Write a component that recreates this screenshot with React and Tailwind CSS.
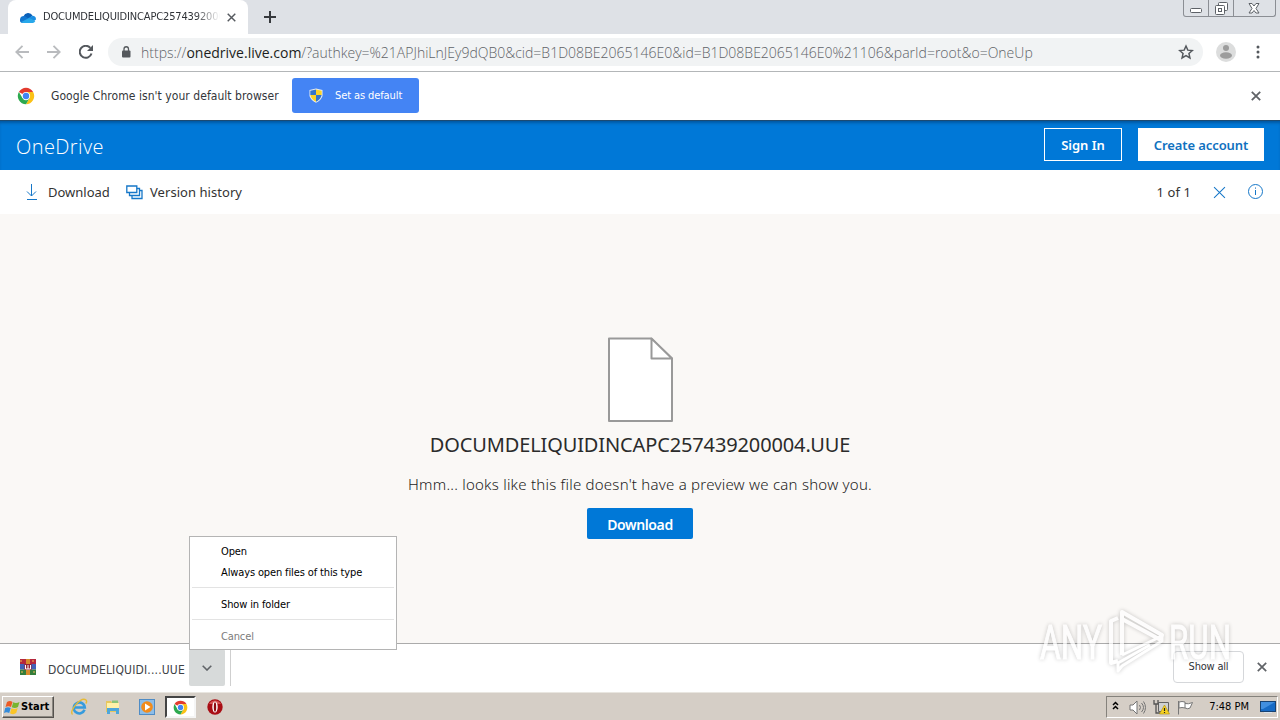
import React from 'react';
import { clsx } from 'clsx';

const segoe = "font-['Noto_Sans','Open_Sans',sans-serif]";
const tahoma = "font-['DejaVu_Sans_Condensed','DejaVu_Sans',sans-serif]";

function ChromeLogo({ className }) {
  return (
    <svg viewBox="0 0 48 48" className={className}>
      <circle cx="24" cy="24" r="22" fill="#fff" />
      <path d="M24 24 5 13A22 22 0 0 1 43 13H24Z" fill="#e33b2e" />
      <path d="M24 13h19A22 22 0 0 1 24 46l9.500-16.500Z" fill="#fbc116" />
      <path d="M5 13A22 22 0 0 0 24 46l9.500-16.500L14.500 29.500Z" fill="#2da94f" />
      <circle cx="24" cy="24" r="11" fill="#fff" />
      <circle cx="24" cy="24" r="8.500" fill="#4285f4" />
    </svg>
  );
}

function CloseIcon({ className, width = 2 }) {
  return (
    <svg viewBox="0 0 10 10" className={className} fill="none" stroke="currentColor" strokeWidth={width}>
      <path d="M.8.8l8.400 8.400M9.200.8.8 9.200" />
    </svg>
  );
}

function WindowControls() {
  return (
    <div className="flex h-[17px] w-[93px] shrink-0 rounded-b-[3px] border border-t-0 border-[#8b8e94] text-[#5d6167]">
      <div className="flex w-[25px] items-center justify-center border-r border-[#8b8e94]">
        <svg viewBox="0 0 13 13" className="h-[13px] w-[13px]" fill="#fff" stroke="currentColor">
          <rect x=".5" y="6.500" width="11" height="4" rx="1" />
        </svg>
      </div>
      <div className="flex w-[25px] items-center justify-center border-r border-[#8b8e94]">
        <svg viewBox="0 0 13 13" className="h-[13px] w-[13px]" fill="#fff" stroke="currentColor">
          <rect x="3.500" y=".5" width="9" height="8" rx="1" />
          <rect x=".5" y="3.500" width="9" height="9" rx="1" />
          <rect x="3.500" y="6.500" width="3" height="3" />
        </svg>
      </div>
      <div className="flex flex-1 items-center justify-center">
        <svg viewBox="0 0 13 11" className="h-[11px] w-[13px]" fill="#fff" stroke="currentColor">
          <path d="M1 .5h3l2 2.500 2-2.500h3L8 5.500l3 4.500H8L6 7.500 4 10H1l3-4.500Z" />
        </svg>
      </div>
    </div>
  );
}

function TabStrip() {
  return (
    <div className="flex h-[34px] items-start bg-[#dee1e6]">
      <div className="ml-2 flex h-[34px] w-[240px] items-center rounded-t-lg bg-white pl-3">
        <svg viewBox="0 0 16 11" className="h-[11px] w-4 shrink-0">
          <path d="M3.500 4.200A5 5 0 0 1 12.500 3.500L8 8Z" fill="#0a60b8" />
          <path d="M0 7.500A3.500 3.500 0 0 1 5 4.300L11 8 2 11A3 3 0 0 1 0 7.500Z" fill="#1377d0" />
          <path d="M8 6.200 12.300 3.700A3.700 3.700 0 0 1 16 7.400L14 9Z" fill="#1b8ee2" />
          <path d="M1.300 10 9 6l6.300 3A3 3 0 0 1 13 11H3.500A3.500 3.500 0 0 1 1.300 10Z" fill="#28a8ea" />
        </svg>
        <span className={clsx(tahoma, 'ml-[7px] w-[177px] shrink-0 overflow-hidden whitespace-nowrap text-[11px] tracking-[-0.15px] text-[#2f3237] [mask-image:linear-gradient(90deg,#000_86%,transparent)]')}>
          DOCUMDELIQUIDINCAPC257439200004.UUE
        </span>
        <CloseIcon className="ml-[7px] h-[9px] w-[9px] shrink-0 text-[#55595e]" width={1.6} />
      </div>
      <svg viewBox="0 0 12 12" className="mt-[11px] ml-4 h-3 w-3" stroke="#36393d" strokeWidth="2">
        <path d="M6 0v12M0 6h12" />
      </svg>
      <div className="flex-1" />
      <WindowControls />
      <div className="w-1" />
    </div>
  );
}

function AddressBar() {
  return (
    <div className="flex h-[38px] items-center border-b border-[#b3b6b8] bg-white">
      <svg viewBox="0 0 14 14" className="mt-[-1px] ml-[15px] h-[14px] w-[14px]" fill="none" stroke="#b9bbbe" strokeWidth="1.800">
        <path d="M14 7H1.500M7.500.8 1.300 7l6.200 6.200" />
      </svg>
      <svg viewBox="0 0 14 14" className="mt-[-1px] ml-[18px] h-[14px] w-[14px]" fill="none" stroke="#b9bbbe" strokeWidth="1.800">
        <path d="M0 7h12.500M6.500.8 12.700 7l-6.200 6.200" />
      </svg>
      <svg viewBox="0 0 14 14" className="mt-[-1px] ml-[18px] h-[14px] w-[14px]" fill="none" stroke="#54585d" strokeWidth="2">
        <path d="M12.500 8.500A6 6 0 1 1 11.300 2.900" />
        <path d="M14 0v6H8Z" fill="#54585d" stroke="none" />
      </svg>
      <div className="mt-[-1px] ml-[15px] flex h-7 w-[1095px] items-center rounded-full bg-[#f1f3f4] pl-[13px]">
        <svg viewBox="0 0 10 12" className="h-3 w-[10px]">
          <rect x="1" y="4.500" width="8.500" height="7" rx="1" fill="#55595d" />
          <path d="M3 5V3a2.250 2.250 0 0 1 4.500 0v2" fill="none" stroke="#55595d" strokeWidth="1.300" />
        </svg>
        <span className="ml-[10px] whitespace-nowrap font-['Open_Sans','Noto_Sans',sans-serif] text-[14px] font-light tracking-[0.003px] text-[#5f6368]">
          https://<span className="font-normal text-[#1c1e21]">onedrive.live.com</span>/?authkey=%21APJhiLnJEy9dQB0&amp;cid=B1D08BE2065146E0&amp;id=B1D08BE2065146E0%21106&amp;parId=root&amp;o=OneUp
        </span>
        <div className="flex-1" />
        <svg viewBox="0 0 24 24" className="mr-[9px] h-4 w-4" fill="none" stroke="#54585d" strokeWidth="2.200">
          <path d="m12 3 2.700 6.200 6.800.6-5.100 4.500 1.500 6.600-5.900-3.500-5.900 3.500 1.500-6.600-5.100-4.500 6.800-.6Z" />
        </svg>
      </div>
      <svg viewBox="0 0 20 20" className="mt-[-1px] ml-[13px] h-5 w-5">
        <circle cx="10" cy="10" r="10" fill="#dcdddd" />
        <circle cx="10" cy="6" r="3" fill="#9c9c9c" />
        <ellipse cx="10" cy="13.500" rx="6" ry="3.200" fill="#9c9c9c" />
      </svg>
      <svg viewBox="0 0 4 14" className="mt-[-1px] ml-[20px] h-[14px] w-1" fill="#54585d">
        <circle cx="2" cy="2" r="1.500" />
        <circle cx="2" cy="7" r="1.500" />
        <circle cx="2" cy="12" r="1.500" />
      </svg>
    </div>
  );
}

function Shield({ className }) {
  return (
    <svg viewBox="0 0 14 15" className={className}>
      <path d="M7 .5 13.500 2v6Q12 12.500 7 14.700 2 12.500.5 8V2Z" fill="#e9edf2" />
      <path d="M7 1.500V7H1.300V2.700Z" fill="#3375cb" />
      <path d="M7 1.500V7h5.700V2.700Z" fill="#fbd327" />
      <path d="M7 7v6.700Q2.400 11.500 1.300 7Z" fill="#fbd327" />
      <path d="M7 7v6.700Q11.600 11.500 12.700 7Z" fill="#3375cb" />
    </svg>
  );
}

function DefaultBrowserBar() {
  return (
    <div className="flex h-12 items-center bg-white">
      <ChromeLogo className="ml-[17px] h-[18px] w-[18px]" />
      <span className={clsx(tahoma, 'ml-4 w-[241px] whitespace-nowrap text-[12px] tracking-[0.05px] text-[#33363a]')}>
        Google Chrome isn't your default browser
      </span>
      <button className="mt-[-1px] flex h-[35px] w-[127px] items-center rounded-[3px] bg-[#4484f4] pl-[17px]">
        <Shield className="h-[15px] w-[14px]" />
        <span className={clsx(tahoma, 'mt-px ml-3 whitespace-nowrap text-[11px] tracking-[-0.1px] text-white')}>Set as default</span>
      </button>
      <div className="flex-1" />
      <CloseIcon className="mr-[19px] h-[10px] w-[10px] text-[#606367]" width={1.8} />
    </div>
  );
}

function OneDriveHeader() {
  return (
    <div className="flex h-[50px] items-center border-t border-[#1c4a72] bg-[#0078d7] pr-4 pb-[2px] pl-4 shadow-[inset_0_3px_3px_-1px_rgba(0,50,100,0.45)]">
      <span className="mt-[5px] font-['Open_Sans','Noto_Sans',sans-serif] text-[20px] font-light tracking-[0.4px] text-white">OneDrive</span>
      <div className="flex-1" />
      <button className={clsx(segoe, 'h-[33px] w-[78px] border border-white pt-[2px] text-[13px] font-semibold text-white')}>Sign In</button>
      <button className={clsx(segoe, 'ml-4 h-[33px] w-[126px] bg-white pt-[2px] text-[13px] font-semibold tracking-[-0.1px] whitespace-nowrap text-[#1071bf]')}>
        Create account
      </button>
    </div>
  );
}

function CommandBar() {
  return (
    <div className={clsx(segoe, 'flex h-11 items-center bg-white text-[13px] text-[#333]')}>
      <svg viewBox="0 0 12 16" className="ml-[26px] h-4 w-3" fill="none" stroke="#1677c8">
        <path d="M5.500 0v12M1 7.500 5.500 12 10 7.500M1 15.500h10" />
      </svg>
      <span className="mt-[2px] ml-[10px] w-[62px] whitespace-nowrap">Download</span>
      <svg viewBox="0 0 17 15" className="ml-4 h-[15px] w-[17px]" fill="#fff" stroke="#1677c8" strokeWidth="1.300">
        <path d="M6 13.500V5.500h10v8Z" />
        <path d="M3.500 10.500v-7h10v7Z" />
        <path d="M.8 7.500V1h10v6.500Z" />
      </svg>
      <span className="mt-[2px] ml-[7px] tracking-[0.05px] whitespace-nowrap">Version history</span>
      <div className="flex-1" />
      <span className="mt-[2px] tracking-[0.1px] whitespace-nowrap">1 of 1</span>
      <CloseIcon className="ml-[22px] h-[13px] w-[13px] text-[#1677c8]" width={0.8} />
      <svg viewBox="0 0 15 15" className="mt-[-1px] mr-[17px] ml-[22px] h-[15px] w-[15px]" fill="none" stroke="#1677c8">
        <circle cx="7.500" cy="7.500" r="7" />
        <path d="M7.500 6v5M7.500 3.500v1.200" />
      </svg>
    </div>
  );
}

function Preview() {
  return (
    <div className={clsx(segoe, 'flex h-[429px] flex-col items-center bg-[#faf8f6] pt-[123px] text-[#2b2b2b]')}>
      <svg viewBox="0 0 66 86" className="h-[86px] w-[66px]" fill="#fff" stroke="#999" strokeWidth="2" strokeLinejoin="round">
        <path d="M2 1.500h42l21 20v62.500h-63Z" />
        <path d="M44.500 1.500v20H65Z" />
      </svg>
      <div className="mt-[8px] h-[28px] text-[20px] leading-[28px] tracking-[-0.13px] whitespace-nowrap">
        DOCUMDELIQUIDINCAPC257439200004.UUE
      </div>
      <div className="mt-[15px] h-5 text-[15px] leading-5 font-light tracking-[0.235px] whitespace-nowrap text-[#1c1c1c]">
        Hmm... looks like this file doesn't have a preview we can show you.
      </div>
      <button className="mt-[14px] h-[31px] w-[106px] shrink-0 rounded-[2px] bg-[#0078d7] pt-px text-[14px] font-semibold tracking-[-0.4px] text-white">
        Download
      </button>
    </div>
  );
}

function DownloadMenu() {
  return (
    <div className={clsx(tahoma, 'absolute bottom-[36px] left-0 h-[114px] w-[208px] border border-[#b4b4b4] bg-white py-1 text-[11px] tracking-[-0.13px] text-black')}>
      <div className="flex h-[21px] items-center pt-[2px] pl-[31px]">Open</div>
      <div className="flex h-[21px] items-center pt-[2px] pl-[31px]">Always open files of this type</div>
      <div className="mx-[2px] my-1 h-px bg-[#e3e3e3]" />
      <div className="flex h-[23px] items-center pt-[4px] pl-[31px]">Show in folder</div>
      <div className="mx-[2px] my-1 h-px bg-[#e3e3e3]" />
      <div className="flex h-[21px] items-center pt-[5px] pl-[31px] text-[#7c7c7c]">Cancel</div>
    </div>
  );
}

function DownloadShelf() {
  return (
    <div className="flex h-[49px] items-center border-t border-[#ababab] bg-white pb-px">
      <svg viewBox="0 0 16 16" className="mt-[-2px] ml-5 h-4 w-4">
        <rect width="16" height="5" fill="#b5283d" />
        <rect y="5" width="16" height="5.500" fill="#4361b8" />
        <rect y="10.500" width="16" height="5.500" fill="#347d3b" />
        <rect x="6" width="4" height="16" fill="#d88b2c" />
        <rect x="4.500" y="5" width="7" height="6" fill="#923" />
        <path d="M5.500 6v4h5V6M8 6v4" fill="none" stroke="#fff" />
        <path d="M1 1v2M13 1v2M2 12v2M14 12v2" stroke="#f2bd58" />
      </svg>
      <span className={clsx(tahoma, 'mt-[5px] ml-3 w-[141px] text-[12px] tracking-[0.17px] whitespace-nowrap text-[#404347]')}>DOCUMDELIQUIDI....UUE</span>
      <div className="relative flex h-[37px] w-9 items-center justify-center rounded-[2px] bg-[#d7dada]">
        <svg viewBox="0 0 10 6" className="h-[6px] w-[10px]" fill="none" stroke="#606468" strokeWidth="1.600">
          <path d="m.7.7 4.300 4.300L9.300.7" />
        </svg>
        <DownloadMenu />
      </div>
      <div className="ml-[5px] h-9 w-px bg-[#cfcfcf]" />
      <div className="flex-1" />
      <button className={clsx(tahoma, 'mt-[-2px] h-8 w-[71px] rounded border border-[#d5d7da] pt-[2px] text-[11px] tracking-[-0.2px] text-[#303338]')}>Show all</button>
      <CloseIcon className="mt-[-2px] mr-[13px] ml-[13px] h-[10px] w-[10px] text-[#606367]" width={1.7} />
    </div>
  );
}

function WindowsFlag({ className }) {
  return (
    <svg viewBox="0 0 16 15" className={className}>
      <path d="M3 2q3-2 5.500 0L7 7Q4.500 5.500 1.500 7Z" fill="#ec5a24" />
      <path d="M9.200 2.300Q12 4 15.500 2L14 7q-3 2-6.200.3Z" fill="#78b530" />
      <path d="M1.200 8Q4 6.500 6.700 8l-1.500 5Q2.500 11.500 0 13Z" fill="#348bda" />
      <path d="M7.500 8.300q3 1.700 6.200-.2l-1.500 5q-3 2-6.200.1Z" fill="#fbc527" />
    </svg>
  );
}

function QuickLaunch() {
  return (
    <>
      <svg viewBox="0 0 18 18" className="ml-[16px] h-[18px] w-[18px]" fill="none">
        <path d="M14.500 11.800A5.500 5.500 0 1 1 14.800 9.500H5" stroke="#369bdd" strokeWidth="2.600" />
        <path d="M2.500 16.500C-1.500 13 11-1.500 16 2c1 1 .5 2.500-.2 3.500" stroke="#e7bb35" strokeWidth="1.400" />
      </svg>
      <svg viewBox="0 0 16 16" className="ml-[17px] h-4 w-4">
        <path d="M1 2h5l1 1.500h7V13H1Z" fill="#e7c75e" />
        <path d="M2 4h12v7H2Z" fill="#fff1a8" />
        <path d="M2 9h12v6h-3v-3H5v3H2Z" fill="#4ea6da" />
        <path d="M7 1.500h6V4H7Z" fill="#8cc57a" />
      </svg>
      <svg viewBox="0 0 16 16" className="ml-[18px] h-4 w-4">
        <rect x=".5" y=".5" width="15" height="15" fill="#8dbde8" stroke="#4f8cc5" />
        <circle cx="8" cy="8" r="5.800" fill="#f28b1b" />
        <path d="M6 4.500v7L11.500 8Z" fill="#fff" />
      </svg>
      <div className="ml-[10px] flex h-[22px] w-[31px] items-center justify-center border-2 border-t-[#444] border-r-[#f5f5f5] border-b-[#f5f5f5] border-l-[#444] bg-white">
        <ChromeLogo className="h-[15px] w-[15px]" />
      </div>
      <svg viewBox="0 0 16 16" className="ml-[11px] h-4 w-4">
        <circle cx="8" cy="8" r="7.700" fill="#a90d14" />
        <path d="M2 5a7 7 0 0 1 12 0Z" fill="#d75555" />
        <ellipse cx="8" cy="8" rx="2.700" ry="5.500" fill="#fff" />
        <ellipse cx="8" cy="8" rx="1.200" ry="4.700" fill="#8d0b10" />
      </svg>
    </>
  );
}

function Tray() {
  return (
    <div className="mr-[2px] flex h-[22px] w-[172px] items-center border border-t-[#85827c] border-r-white border-b-white border-l-[#85827c]">
      <svg viewBox="0 0 7 9" className="mt-[-3px] ml-[5px] h-[9px] w-[7px]" fill="none" stroke="#000" strokeWidth="1.500">
        <path d="m1 4 2.500-2.500L6 4M1 8l2.500-2.500L6 8" />
      </svg>
      <svg viewBox="0 0 17 15" className="ml-[10px] h-[15px] w-[17px]" fill="none" stroke="#747474">
        <path d="M1 5h3l4-4v13l-4-4H1Z" fill="#fff" />
        <path d="M10.500 5q2 2.500 0 5M12.500 3q4 4.500 0 9M14.500 1.500q4 6 0 12" />
      </svg>
      <svg viewBox="0 0 17 16" className="ml-[7px] h-4 w-[17px]">
        <path d="M5.500 3.500h10v9h-10Z" fill="#cfd1d2" stroke="#626262" />
        <path d="M1 1v4h4V1M3 5v9h4" fill="none" stroke="#555" strokeWidth="1.300" />
        <path d="m11.500 6 5 9h-10Z" fill="#f7d222" stroke="#ad8d0c" strokeWidth=".6" />
        <path d="M11.500 9v3M11.500 13v1" stroke="#222" strokeWidth="1.200" />
      </svg>
      <svg viewBox="0 0 17 15" className="ml-[7px] h-[15px] w-[17px]" fill="#fff" stroke="#777">
        <path d="M1.500 1v13.500M2 2q3-1 6 0v6q-3-1-6 0ZM8 3.500q3 1 7.500-1L13 8q-2 1.500-5 0" />
      </svg>
      <div className="flex-1" />
      <span className={clsx(tahoma, 'mt-px text-[11px] whitespace-nowrap text-black')}>7:48 PM</span>
      <svg viewBox="0 0 16 13" className="mr-[1px] ml-[11px] h-[13px] w-4">
        <rect x=".5" y=".5" width="15" height="10" fill="#176bc5" stroke="#174272" />
        <path d="M1 1h14L3 8H1Z" fill="#418fdf" />
        <path d="M4 11.500h8" stroke="#d8e2ed" />
      </svg>
    </div>
  );
}

function Taskbar() {
  return (
    <div className="flex h-7 items-center border-t border-[#e9e6e0] bg-[#d5cec6] pt-px">
      <button className="ml-[2px] flex h-[22px] w-[52px] items-center border border-t-white border-r-[#55524e] border-b-[#55524e] border-l-white shadow-[inset_-1px_-1px_#8c8881]">
        <WindowsFlag className="ml-px h-[15px] w-4 shrink-0" />
        <span className={clsx(tahoma, 'mt-px ml-px text-[11px] font-bold tracking-[0.05px] text-black')}>Start</span>
      </button>
      <QuickLaunch />
      <div className="flex-1" />
      <Tray />
    </div>
  );
}

function Watermark() {
  return (
    <svg
      viewBox="0 0 204 72"
      className="pointer-events-none absolute top-[605px] left-[1034px] h-[72px] w-[204px] opacity-70 drop-shadow-[0_0_2px_rgba(0,0,0,0.3)]"
    >
      <g fill="#fff" stroke="#fff" fontFamily="Roboto, sans-serif" fontSize="48">
        <text x="6" y="54" textLength="62" lengthAdjust="spacingAndGlyphs">ANY</text>
        <text x="135" y="54" textLength="62" lengthAdjust="spacingAndGlyphs">RUN</text>
      </g>
      <g fill="none" stroke="#fff" strokeWidth="4" strokeLinejoin="round">
        <path d="M88 50V7l40 23-3 4-37-20" />
        <path d="M84 13l-7 3v42l7-2" />
        <path d="M88 50l40-19v5L88 61l-4 5V58l32-18" strokeWidth="3" />
      </g>
    </svg>
  );
}

export default function App() {
  return (
    <div className="relative h-[720px] w-[1280px] overflow-hidden bg-white">
      <TabStrip />
      <AddressBar />
      <DefaultBrowserBar />
      <OneDriveHeader />
      <CommandBar />
      <Preview />
      <DownloadShelf />
      <Taskbar />
      <Watermark />
    </div>
  );
}
